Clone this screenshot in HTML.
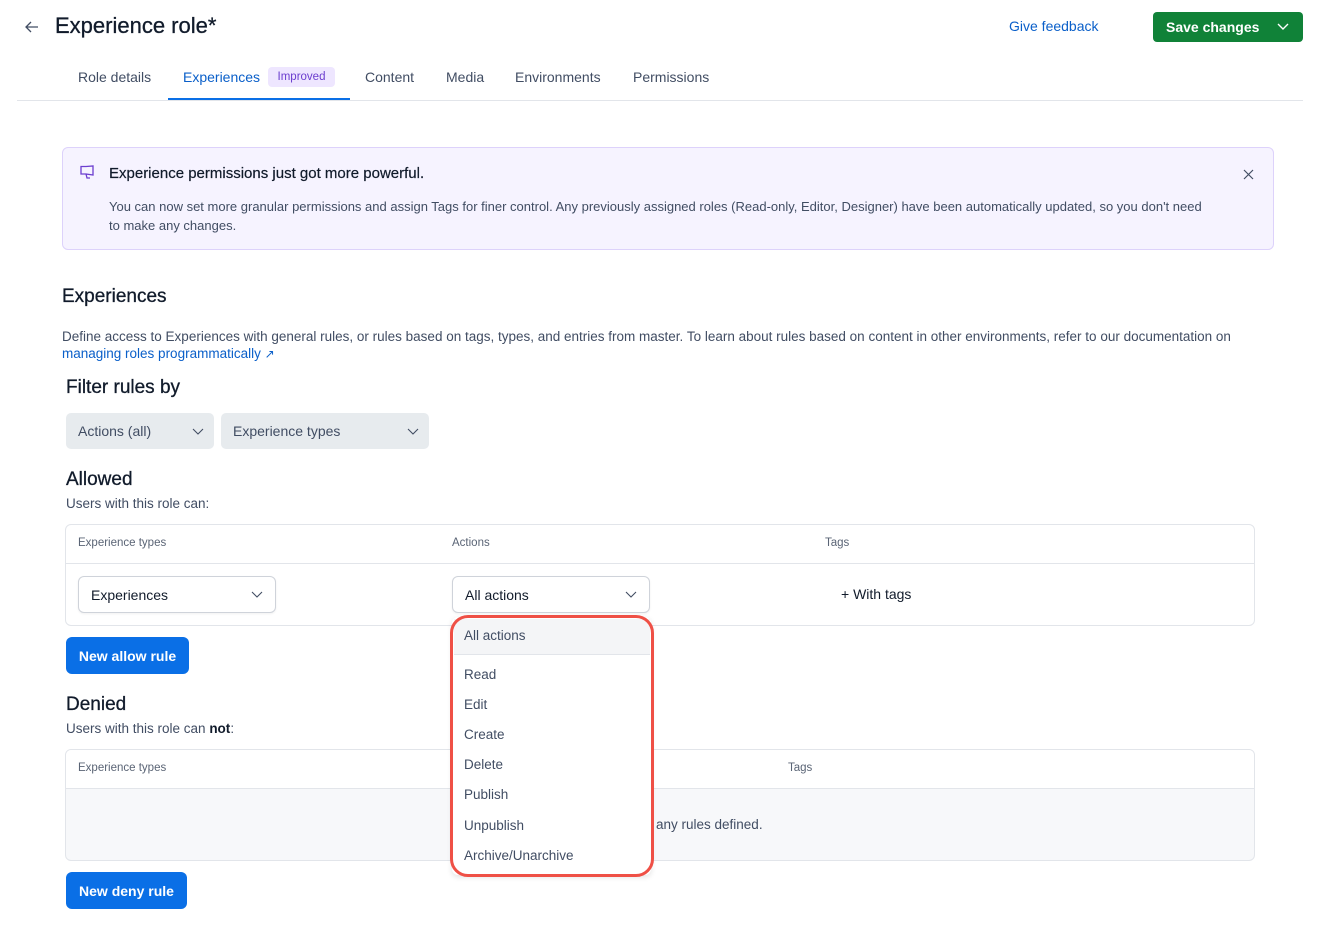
<!DOCTYPE html>
<html><head><meta charset="utf-8"><style>
*{box-sizing:border-box;margin:0;padding:0}
body{width:1320px;height:926px;background:#fff;font-family:"Liberation Sans",sans-serif;color:#111b2b;position:relative;overflow:hidden}
.a{position:absolute;white-space:nowrap}
.tab{position:absolute;top:69px;font-size:14px;color:#414d63}
.sel{position:absolute;border:1px solid #cfd3da;border-radius:6px;background:#fff;font-size:14px;padding:0 12px;display:flex;align-items:center;justify-content:space-between;box-shadow:0 1px 2px rgba(0,0,0,.06)}
.chev{width:12px;height:8px}
.btn{position:absolute;background:#0a6fe6;color:#fff;font-size:14px;font-weight:bold;border-radius:6px;display:flex;align-items:center;justify-content:center}
.item{position:absolute;left:464px;font-size:13.5px;color:#414d63}
h2{font-weight:normal}
</style></head><body>
<svg class="a" style="left:24px;top:20px" width="16" height="14" viewBox="0 0 16 14"><path d="M14 7H2M7 2L2 7l5 5" fill="none" stroke="#414d63" stroke-width="1.3"/></svg>
<div class="a" style="left:55px;top:13px;font-size:22px;color:#111b2b;-webkit-text-stroke:0.3px #111b2b">Experience role*</div>
<div class="a" style="left:1009px;top:18px;font-size:14px;color:#0a5fc9">Give feedback</div>
<div class="a" style="left:1153px;top:12px;width:150px;height:30px;background:#108238;border-radius:4px;color:#fff;font-size:14px;font-weight:bold;padding:7px 0 0 13px">Save changes
<svg style="position:absolute;right:14px;top:11px" width="12" height="8" viewBox="0 0 12 8"><path d="M1 1l5 5 5-5" fill="none" stroke="#fff" stroke-width="1.4"/></svg></div>
<div class="tab" style="left:78px">Role details</div>
<div class="tab" style="left:183px;color:#0a5fc9">Experiences</div>
<div class="a" style="left:268px;top:67px;width:67px;height:20px;background:#eee6ff;border-radius:4px;color:#6c3ecf;font-size:11.5px;text-align:center;line-height:20px">Improved</div>
<div class="tab" style="left:365px">Content</div>
<div class="tab" style="left:446px">Media</div>
<div class="tab" style="left:515px">Environments</div>
<div class="tab" style="left:633px">Permissions</div>
<div class="a" style="left:17px;top:100px;width:1286px;height:1px;background:#e2e5ea"></div>
<div class="a" style="left:168px;top:98px;width:182px;height:2px;background:#0a6fe6"></div>

<div class="a" style="left:62px;top:147px;width:1212px;height:103px;background:#f6f3ff;border:1px solid #ddd2fb;border-radius:6px"></div>
<svg class="a" style="left:80px;top:165px" width="17" height="14" viewBox="0 0 17 14"><path d="M1 1.5h5l7-0.5v9l-7-1H1z M6 9l1 4h3" fill="none" stroke="#6c3ecf" stroke-width="1.3"/></svg>
<div class="a" style="left:109px;top:165px;font-size:15px;color:#111b2b;-webkit-text-stroke:0.2px #111b2b">Experience permissions just got more powerful.</div>
<div class="a" style="left:109px;top:197px;font-size:13px;color:#414d63;line-height:19px;white-space:normal;width:1105px">You can now set more granular permissions and assign Tags for finer control. Any previously assigned roles (Read-only, Editor, Designer) have been automatically updated, so you don't need to make any changes.</div>
<svg class="a" style="left:1243px;top:169px" width="11" height="11" viewBox="0 0 11 11"><path d="M1 1l9 9M10 1l-9 9" stroke="#414d63" stroke-width="1.2"/></svg>

<div class="a" style="left:62px;top:286px;font-size:19px;-webkit-text-stroke:0.3px #111b2b">Experiences</div>
<div class="a" style="left:62px;top:327px;font-size:13.5px;color:#414d63;line-height:19px">Define access to Experiences with general rules, or rules based on tags, types, and entries from master. To learn about rules based on content in other environments, refer to our documentation on</div>
<div class="a" style="left:62px;top:346px;font-size:13.5px;color:#0a5fc9">managing roles programmatically <span style="font-size:12px">↗</span></div>
<div class="a" style="left:66px;top:377px;font-size:19px;-webkit-text-stroke:0.3px #111b2b">Filter rules by</div>
<div class="a" style="left:66px;top:413px;width:148px;height:36px;background:#e7ebee;border-radius:5px;font-size:14px;color:#414d63;padding:10px 0 0 12px">Actions (all)<svg style="position:absolute;right:10px;top:15px" width="12" height="8" viewBox="0 0 12 8"><path d="M1 1l5 5 5-5" fill="none" stroke="#414d63" stroke-width="1.1"/></svg></div>
<div class="a" style="left:221px;top:413px;width:208px;height:36px;background:#e7ebee;border-radius:5px;font-size:14px;color:#414d63;padding:10px 0 0 12px">Experience types<svg style="position:absolute;right:10px;top:15px" width="12" height="8" viewBox="0 0 12 8"><path d="M1 1l5 5 5-5" fill="none" stroke="#414d63" stroke-width="1.1"/></svg></div>

<div class="a" style="left:66px;top:469px;font-size:19px;-webkit-text-stroke:0.3px #111b2b">Allowed</div>
<div class="a" style="left:66px;top:496px;font-size:13.5px;color:#414d63">Users with this role can:</div>
<div class="a" style="left:65px;top:524px;width:1190px;height:102px;border:1px solid #e2e5ea;border-radius:6px"></div>
<div class="a" style="left:66px;top:563px;width:1188px;height:1px;background:#e2e5ea"></div>
<div class="a" style="left:78px;top:537px;font-size:11.5px;color:#5a6475">Experience types</div>
<div class="a" style="left:452px;top:537px;font-size:11.5px;color:#5a6475">Actions</div>
<div class="a" style="left:825px;top:537px;font-size:11.5px;color:#5a6475">Tags</div>
<div class="sel" style="left:78px;top:576px;width:198px;height:37px">Experiences<svg class="chev" viewBox="0 0 12 8"><path d="M1 1l5 5 5-5" fill="none" stroke="#414d63" stroke-width="1.1"/></svg></div>
<div class="sel" style="left:452px;top:576px;width:198px;height:37px">All actions<svg class="chev" viewBox="0 0 12 8"><path d="M1 1l5 5 5-5" fill="none" stroke="#414d63" stroke-width="1.1"/></svg></div>
<div class="a" style="left:841px;top:586px;font-size:14px">+ With tags</div>
<div class="btn" style="left:66px;top:637px;width:123px;height:37px">New allow rule</div>

<div class="a" style="left:66px;top:694px;font-size:19px;-webkit-text-stroke:0.3px #111b2b">Denied</div>
<div class="a" style="left:66px;top:721px;font-size:13.5px;color:#414d63">Users with this role can <b style="color:#111b2b">not</b>:</div>
<div class="a" style="left:65px;top:749px;width:1190px;height:112px;border:1px solid #e2e5ea;border-radius:6px;background:#f7f8fa;overflow:hidden"><div style="height:39px;background:#fff;border-bottom:1px solid #e2e5ea"></div></div>
<div class="a" style="left:78px;top:762px;font-size:11.5px;color:#5a6475">Experience types</div>
<div class="a" style="left:788px;top:762px;font-size:11.5px;color:#5a6475">Tags</div>
<div class="a" style="left:656px;top:817px;font-size:13.5px;color:#414d63">any rules defined.</div>
<div class="btn" style="left:66px;top:872px;width:121px;height:37px">New deny rule</div>

<div class="a" style="left:452px;top:617px;width:199px;height:258px;background:#fff;border-radius:6px;box-shadow:0 2px 6px rgba(0,0,0,.12)"></div>
<div class="a" style="left:454px;top:619px;width:196px;height:36px;background:#f4f5f7;border-bottom:1px solid #e2e5ea"></div>
<div class="a" style="left:450px;top:615px;width:204px;height:262px;border:3px solid #ef5046;border-radius:18px"></div>
<div class="item" style="top:628px">All actions</div>
<div class="item" style="top:667px">Read</div>
<div class="item" style="top:697px">Edit</div>
<div class="item" style="top:727px">Create</div>
<div class="item" style="top:757px">Delete</div>
<div class="item" style="top:787px">Publish</div>
<div class="item" style="top:818px">Unpublish</div>
<div class="item" style="top:848px">Archive/Unarchive</div>
</body></html>
